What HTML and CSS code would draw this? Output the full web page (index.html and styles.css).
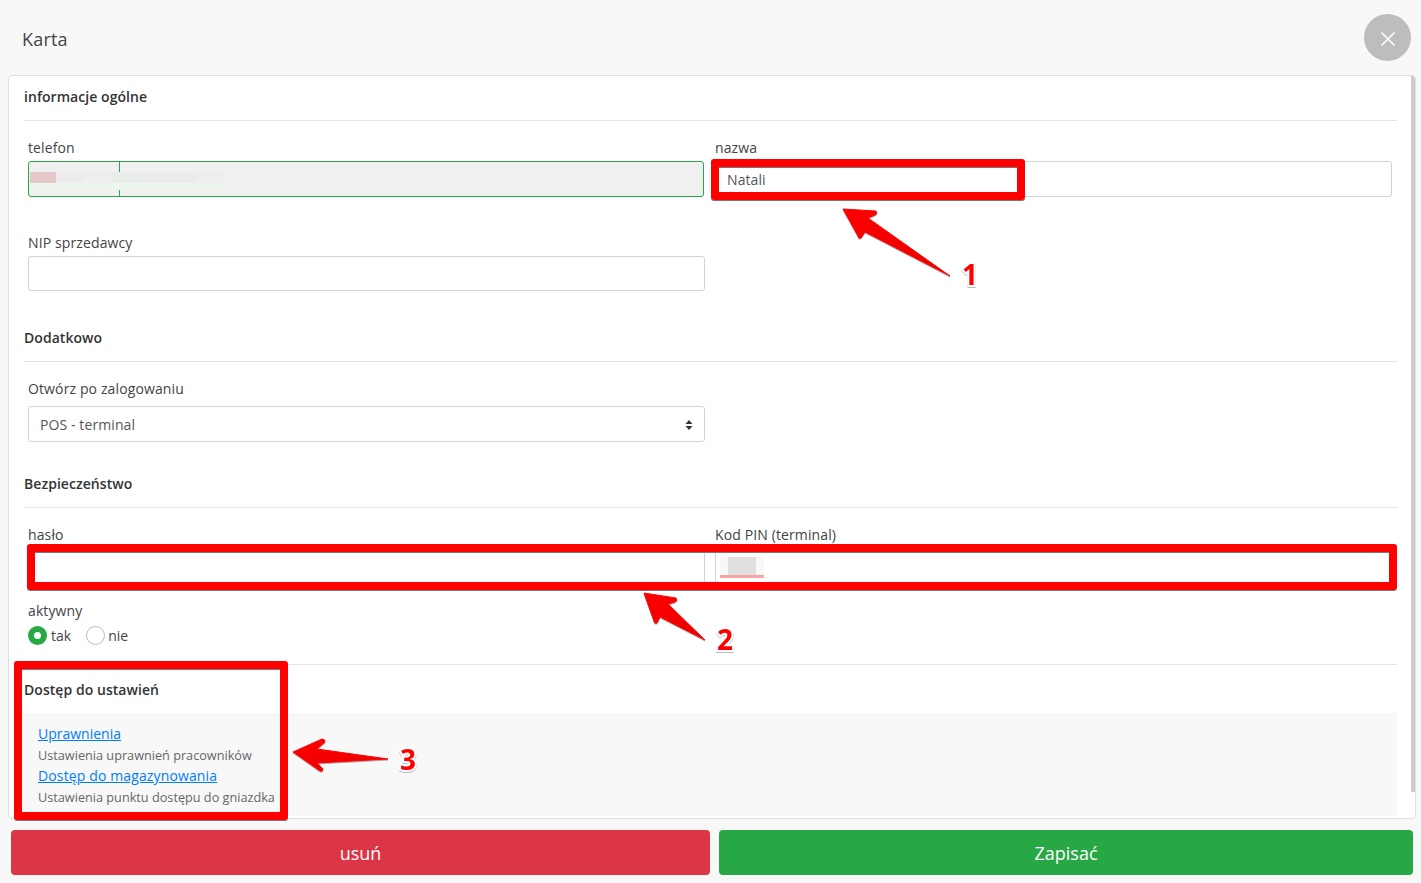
FILE: index.html
```html
<!DOCTYPE html>
<html lang="pl">
<head>
<meta charset="utf-8">
<title>Karta</title>
<link rel="stylesheet" href="styles.css">
</head>
<body>

<div class="header">
	<h1>Karta</h1>
	<button class="close" type="button" aria-label="close">
		<svg width="16" height="16" viewBox="0 0 16 16"><path d="M1.5 1.5l13 13M14.5 1.5l-13 13" stroke="#fff" stroke-width="1.5" fill="none"/></svg>
	</button>
</div>

<div class="card">
	<div class="scrollbar"></div>

	<h2 class="first">informacje ogólne</h2>
	<div class="row row-phone">
		<div class="field">
			<label>telefon</label>
			<div class="input phone"><span class="tick"></span><span class="blur-top"></span><span class="blur-bottom"></span></div>
		</div>
		<div class="field">
			<label>nazwa</label>
			<div class="input">Natali</div>
		</div>
	</div>
	<div class="row row-nip">
		<div class="field">
			<label>NIP sprzedawcy</label>
			<div class="input short"></div>
		</div>
	</div>

	<h2 class="extra">Dodatkowo</h2>
	<div class="row row-open">
		<div class="field">
			<label class="tall">Otwórz po zalogowaniu</label>
			<div class="input select">POS - terminal
				<svg width="8" height="10" viewBox="0 0 8 10"><path d="M4 0l3.5 4h-7zM4 10l3.5-4h-7z" fill="#333"/></svg>
			</div>
		</div>
	</div>

	<h2 class="security">Bezpieczeństwo</h2>
	<div class="row row-pass">
		<div class="field">
			<label>hasło</label>
			<div class="input"></div>
		</div>
		<div class="field">
			<label>Kod PIN (terminal)</label>
			<div class="input"><span class="blur-pin"></span></div>
		</div>
	</div>

	<div class="active">
		<label>aktywny</label>
		<div class="radios">
			<span class="radio on"></span><span class="radio-text">tak</span>
			<span class="radio"></span><span class="radio-text">nie</span>
		</div>
	</div>

	<h2 class="access">Dostęp do ustawień</h2>
	<div class="links">
		<a href="#">Uprawnienia</a>
		<p>Ustawienia uprawnień pracowników</p>
		<a href="#">Dostęp do magazynowania</a>
		<p>Ustawienia punktu dostępu do gniazdka</p>
	</div>
</div>

<div class="footer">
	<button class="btn red" type="button">usuń</button>
	<button class="btn green" type="button">Zapisać</button>
</div>

<!-- annotations drawn on top of the screenshot -->
<div class="mark mark1"></div>
<div class="mark mark2"></div>
<div class="mark mark3"></div>

<svg class="arrows" width="1421" height="883" viewBox="0 0 1421 883">
	<defs>
		<linearGradient id="arrowfill" x1="0" y1="0" x2="1" y2="1">
			<stop offset="0" stop-color="#ff0000"/>
			<stop offset="1" stop-color="#e60000"/>
		</linearGradient>
	</defs>
	<g fill="url(#arrowfill)" stroke="#ff0000" stroke-width="1" stroke-linejoin="round">
		<path d="M843 209L876 211Q878 214 875 215L868 218L950 276L865 232L861 238Q858 239 858 236Z"/>
		<path d="M644 593L676 598Q678 601 675 602L668 604L705 640L660 617L657 623Q654 624 654 621Z"/>
		<path d="M293 752L322 739Q325 739 325 742L317 749L388 759L317 763L323 769Q323 772 320 771Z"/>
	</g>
</svg>
<span class="num num1">1</span>
<span class="num num2">2</span>
<span class="num num3">3</span>

</body>
</html>
```

FILE: styles.css
```css
* {
    box-sizing: border-box;
}
body {
    margin: 0;
    width: 1421px;
    height: 883px;
    overflow: hidden;
    position: relative;
    background-color: #f8f8f8;
    font-family: "Open Sans", "Noto Sans", sans-serif;
    font-size: 14px;
    color: #444;
}

.header {
    height: 75px;
    display: flex;
    align-items: center;
    justify-content: space-between;
    padding: 0 10px 0 22px;
}
.header h1 {
    margin: 2px 0 0;
    font-size: 18px;
    font-weight: 400;
    letter-spacing: .2px;
    color: #444;
}
.close {
    width: 47px;
    height: 47px;
    margin-bottom: 1px;
    padding: 4px 0 0;
    border: 0;
    border-radius: 50%;
    background-color: #bdbdbd;
    display: flex;
    align-items: center;
    justify-content: center;
}

.card {
    position: relative;
    height: 744px;
    margin: 0 5px 0 8px;
    padding: 0 18px 0 15px;
    background-color: #fff;
    border: 1px solid #dfdfdf;
    border-radius: 4px;
    overflow: hidden;
}
.scrollbar {
    position: absolute;
    top: 0;
    right: 0;
    width: 4px;
    height: 716px;
    background-color: #ccc;
}

h2 {
    margin: 0;
    font-size: 14px;
    line-height: 20px;
    font-weight: 600;
    letter-spacing: .05px;
    color: #333;
    border-bottom: 1px solid #e3e3e3;
}
h2.first {
    padding-top: 1px;
    margin-top: 10px;
    height: 35px;
}
h2.extra {
    padding-top: 1px;
    margin-top: 36px;
    height: 35px;
}
h2.security {
    padding-top: 1px;
    margin-top: 31px;
    height: 35px;
}
h2.access {
    margin-top: 19px;
    height: 49px;
    padding-top: 15px;
    border-bottom: 0;
    border-top: 1px solid #e3e3e3;
}

.row {
    display: grid;
    grid-template-columns: 677px 677px;
    column-gap: 10px;
    padding-left: 4px;
}
.row-phone {
    margin-top: 17px;
}
.row-nip {
    margin-top: 36px;
}
.row-open {
    margin-top: 17px;
}
.row-pass {
    margin-top: 17px;
}

.field label,
.active label {
    display: block;
    height: 23px;
    line-height: 20px;
    letter-spacing: .12px;
}
.field label.tall {
    height: 27px;
}
.active label {
    height: 24px;
}

.input {
    position: relative;
    height: 36px;
    padding: 0 11px;
    line-height: 36px;
    letter-spacing: .1px;
    background-color: #fff;
    border: 1px solid #ced4da;
    border-radius: 3px;
    color: #555;
}
.input.short {
    height: 35px;
}
.phone {
    background-color: #f0f0f0;
    border-color: #28a745;
    width: 676px;
}
.tick {
    position: absolute;
    left: 90px;
    top: 0;
    width: 1px;
    height: 34px;
    background-color: #28a745;
}
.blur-top {
    position: absolute;
    left: 1px;
    top: 10px;
    width: 195px;
    height: 11px;
    background: linear-gradient(90deg, #e6c8cb 0 26px, #ececec 26px 54px, #eee 54px 82px, #e8ede9 82px 110px, #ebebeb 110px 166px, #eee 166px);
}
.blur-bottom {
    position: absolute;
    left: 1px;
    top: 21px;
    width: 199px;
    height: 7px;
    background-color: #edf5ef;
}
.blur-pin {
    position: absolute;
    left: 4px;
    top: 8px;
    width: 44px;
    height: 21px;
    background: linear-gradient(90deg, #f8f8f8 0 8px, #e0e0e0 8px 36px, #f8f8f8 36px);
    border-bottom: 3px solid #f5a5a5;
}
.select {
    display: flex;
    align-items: center;
    justify-content: space-between;
    padding-top: 2px;
    color: #555;
}

.active {
    margin-top: 17px;
    padding-left: 4px;
}
.radios {
    display: flex;
    align-items: center;
    height: 20px;
}
.radio {
    width: 19px;
    height: 19px;
    border: 1px solid #b5bcc4;
    border-radius: 50%;
    background-color: #fff;
}
.radio.on {
    border: 6px solid #28a745;
}
.radio-text {
    margin: 0 15px 0 4px;
}
.radio-text:last-child {
    margin-left: 3px;
}

.links {
    height: 103px;
    margin-left: -2px;
    padding: 10px 16px;
    background-color: #f8f8f8;
}
.links a {
    display: block;
    height: 21px;
    line-height: 21px;
    color: #007bff;
    text-decoration: underline;
}
.links a + p + a {
    letter-spacing: .13px;
}
.links p {
    margin: 0;
    height: 21px;
    padding-top: 1px;
    line-height: 21px;
    font-size: 12.7px;
    color: #666;
}

.footer {
    display: flex;
    justify-content: space-between;
    padding: 11px 8px 0 11px;
}
.btn {
    height: 45px;
    border: 0;
    border-radius: 4px;
    color: #fff;
    font-family: inherit;
    font-size: 18px;
}
.red {
    width: 699px;
    background-color: #dc3545;
}
.green {
    width: 694px;
    background-color: #28a745;
}

/* annotations */
.mark {
    position: absolute;
    border: 8px solid #ff0000;
    border-radius: 3px;
    box-shadow: 0 1px 0 #777, inset 0 1px 0 #777;
}
.mark1 {
    left: 711px;
    top: 159px;
    width: 314px;
    height: 41px;
}
.mark2 {
    left: 27px;
    top: 544px;
    width: 1370px;
    height: 46px;
}
.mark3 {
    left: 14px;
    top: 661px;
    width: 274px;
    height: 159px;
}
.arrows {
    position: absolute;
    left: 0;
    top: 0;
    filter: drop-shadow(0 1px 0 rgba(0, 0, 0, .3));
}
.num {
    position: absolute;
    font-family: "Open Sans", sans-serif;
    font-size: 28px;
    font-weight: 700;
    line-height: 32px;
    color: #ff0000;
    paint-order: stroke fill;
    -webkit-text-stroke: 4px #fff;
    filter: drop-shadow(0 1px 0 #bbb);
}
.num1 {
    left: 962px;
    top: 258px;
}
.num2 {
    left: 717px;
    top: 623px;
}
.num3 {
    left: 400px;
    top: 743px;
}
```
